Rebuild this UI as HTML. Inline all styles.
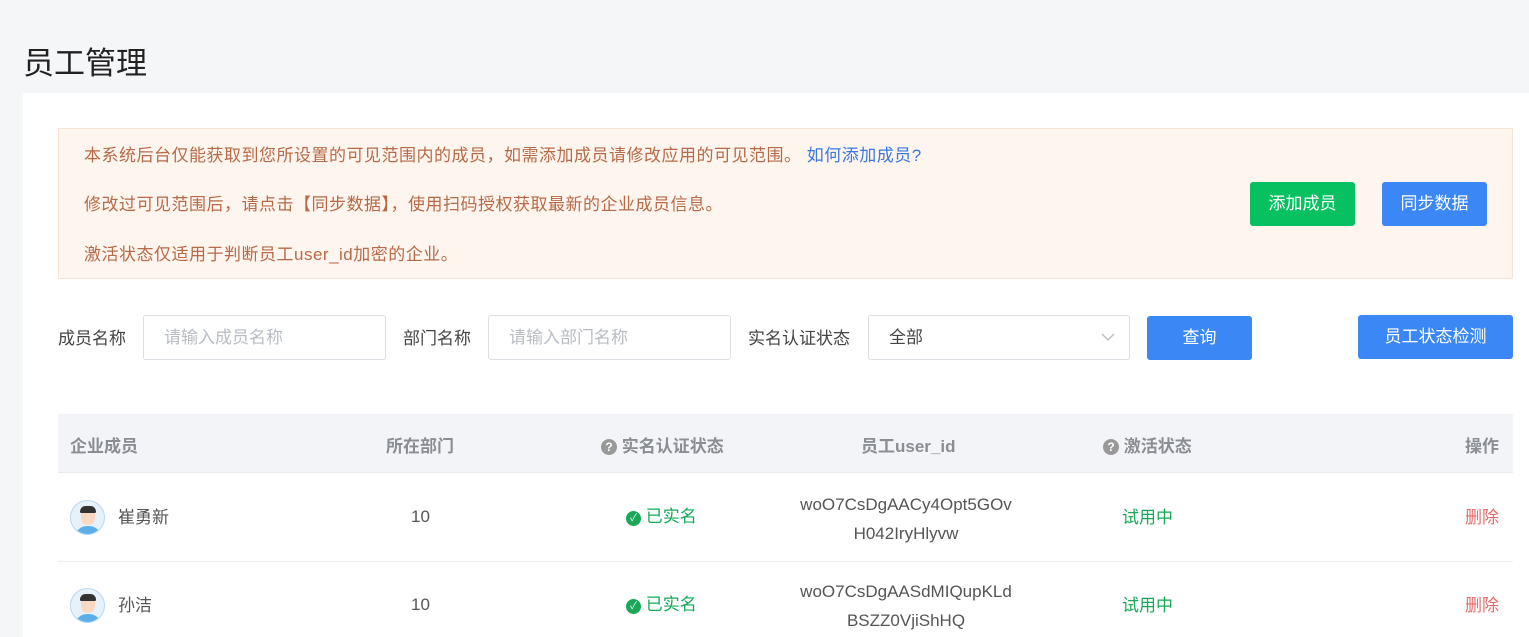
<!DOCTYPE html>
<html><head><meta charset="utf-8"><style>
*{margin:0;padding:0;box-sizing:border-box}
body{width:1529px;height:637px;overflow:hidden;background:#f5f6f8;font-family:"Liberation Sans","Noto Sans CJK SC",sans-serif;color:#333;position:relative}
.a{position:absolute}
h1{position:absolute;left:23px;top:38px;font-size:31px;font-weight:normal;color:#222}
.card{position:absolute;left:23px;top:93px;width:1506px;height:544px;background:#fff}
.alert{left:58px;top:128px;width:1455px;height:151px;background:#fdf5ee;border:1px solid #f9e3d3}
.at{position:absolute;left:25px;font-size:17px;color:#b86a48;white-space:nowrap;letter-spacing:0.5px}
.btn{position:absolute;color:#fff;font-size:17px;text-align:center;border-radius:3px}
.lbl{font-size:17px;color:#444}
.inp{border:1px solid #dcdfe6;border-radius:3px;height:45px;font-size:17px;color:#b8bcc4;padding-left:20px;line-height:43px}
.th{font-size:17px;font-weight:bold;color:#8a8d93;top:432px}
.c{font-size:17px;color:#555;text-align:center}
.g{color:#18a957}
</style></head><body>
<h1>员工管理</h1>
<div class="card"></div>
<div class="a alert">
<div class="at" style="top:12px">本系统后台仅能获取到您所设置的可见范围内的成员，如需添加成员请修改应用的可见范围。 <span style="color:#3a78e0">如何添加成员?</span></div>
<div class="at" style="top:61px">修改过可见范围后，请点击【同步数据】，使用扫码授权获取最新的企业成员信息。</div>
<div class="at" style="top:111px">激活状态仅适用于判断员工user_id加密的企业。</div>
</div>
<div class="btn" style="left:1250px;top:182px;width:105px;height:44px;line-height:44px;background:#07c160">添加成员</div>
<div class="btn" style="left:1382px;top:182px;width:105px;height:44px;line-height:44px;background:#3b87f5">同步数据</div>

<div class="a lbl" style="left:58px;top:324px">成员名称</div>
<div class="a inp" style="left:143px;top:315px;width:243px">请输入成员名称</div>
<div class="a lbl" style="left:403px;top:324px">部门名称</div>
<div class="a inp" style="left:488px;top:315px;width:243px">请输入部门名称</div>
<div class="a lbl" style="left:748px;top:324px">实名认证状态</div>
<div class="a inp" style="left:868px;top:315px;width:262px;color:#444">全部
<svg style="position:absolute;right:14px;top:16px" width="14" height="10" viewBox="0 0 14 10"><path d="M1 2l6 6 6-6" fill="none" stroke="#b8bcc4" stroke-width="1.3"/></svg></div>
<div class="btn" style="left:1147px;top:316px;width:105px;height:44px;line-height:44px;background:#3b87f5">查询</div>
<div class="btn" style="left:1358px;top:315px;width:155px;height:44px;line-height:44px;background:#3b87f5">员工状态检测</div>

<div class="a" style="left:58px;top:414px;width:1455px;height:59px;background:#f2f4f8;border-bottom:1px solid #e8eaee"></div>
<div class="a th" style="left:70px">企业成员</div>
<div class="a th" style="left:386px">所在部门</div>
<div class="a th" style="left:601px"><span style="display:inline-block;width:16px;height:16px;border-radius:50%;background:#999;color:#fff;font-size:12px;text-align:center;line-height:16px;vertical-align:1px">?</span> 实名认证状态</div>
<div class="a th" style="left:861px">员工user_id</div>
<div class="a th" style="left:1103px"><span style="display:inline-block;width:16px;height:16px;border-radius:50%;background:#999;color:#fff;font-size:12px;text-align:center;line-height:16px;vertical-align:1px">?</span> 激活状态</div>
<div class="a th" style="left:1465px">操作</div>
<div class="a" style="left:58px;top:561px;width:1455px;height:1px;background:#ebeef2"></div>

<div class="a" style="left:70px;top:500px;width:35px;height:35px;border-radius:50%;background:#e6f1fb;border:1px solid #b9d6f0;overflow:hidden"><div style="position:absolute;left:10px;top:7px;width:14px;height:17px;border-radius:7px;background:#f8d8c0"></div><div style="position:absolute;left:9px;top:5px;width:16px;height:7px;border-radius:8px 8px 2px 2px;background:#333"></div><div style="position:absolute;left:4px;top:25px;width:26px;height:14px;border-radius:12px 12px 0 0;background:#5aaeea"></div></div>
<div class="a c" style="left:118px;top:503px">崔勇新</div>
<div class="a c" style="left:411px;top:507px">10</div>
<div class="a c g" style="left:626px;top:502px"><span style="display:inline-block;width:15px;height:15px;border-radius:50%;background:#18a957;color:#fff;font-size:10px;line-height:15px;vertical-align:1px">✓</span> 已实名</div>
<div class="a c" style="left:790px;top:490px;width:232px;line-height:29px">woO7CsDgAACy4Opt5GOv<br>H042IryHlyvw</div>
<div class="a c g" style="left:1122px;top:503px">试用中</div>
<div class="a c" style="left:1465px;top:503px;color:#e86a6a">删除</div>

<div class="a" style="left:70px;top:588px;width:35px;height:35px;border-radius:50%;background:#e6f1fb;border:1px solid #b9d6f0;overflow:hidden"><div style="position:absolute;left:10px;top:7px;width:14px;height:17px;border-radius:7px;background:#f8d8c0"></div><div style="position:absolute;left:9px;top:5px;width:16px;height:7px;border-radius:8px 8px 2px 2px;background:#333"></div><div style="position:absolute;left:4px;top:25px;width:26px;height:14px;border-radius:12px 12px 0 0;background:#5aaeea"></div></div>
<div class="a c" style="left:118px;top:591px">孙洁</div>
<div class="a c" style="left:411px;top:595px">10</div>
<div class="a c g" style="left:626px;top:590px"><span style="display:inline-block;width:15px;height:15px;border-radius:50%;background:#18a957;color:#fff;font-size:10px;line-height:15px;vertical-align:1px">✓</span> 已实名</div>
<div class="a c" style="left:790px;top:577px;width:232px;line-height:29px">woO7CsDgAASdMIQupKLd<br>BSZZ0VjiShHQ</div>
<div class="a c g" style="left:1122px;top:591px">试用中</div>
<div class="a c" style="left:1465px;top:591px;color:#e86a6a">删除</div>
</body></html>
